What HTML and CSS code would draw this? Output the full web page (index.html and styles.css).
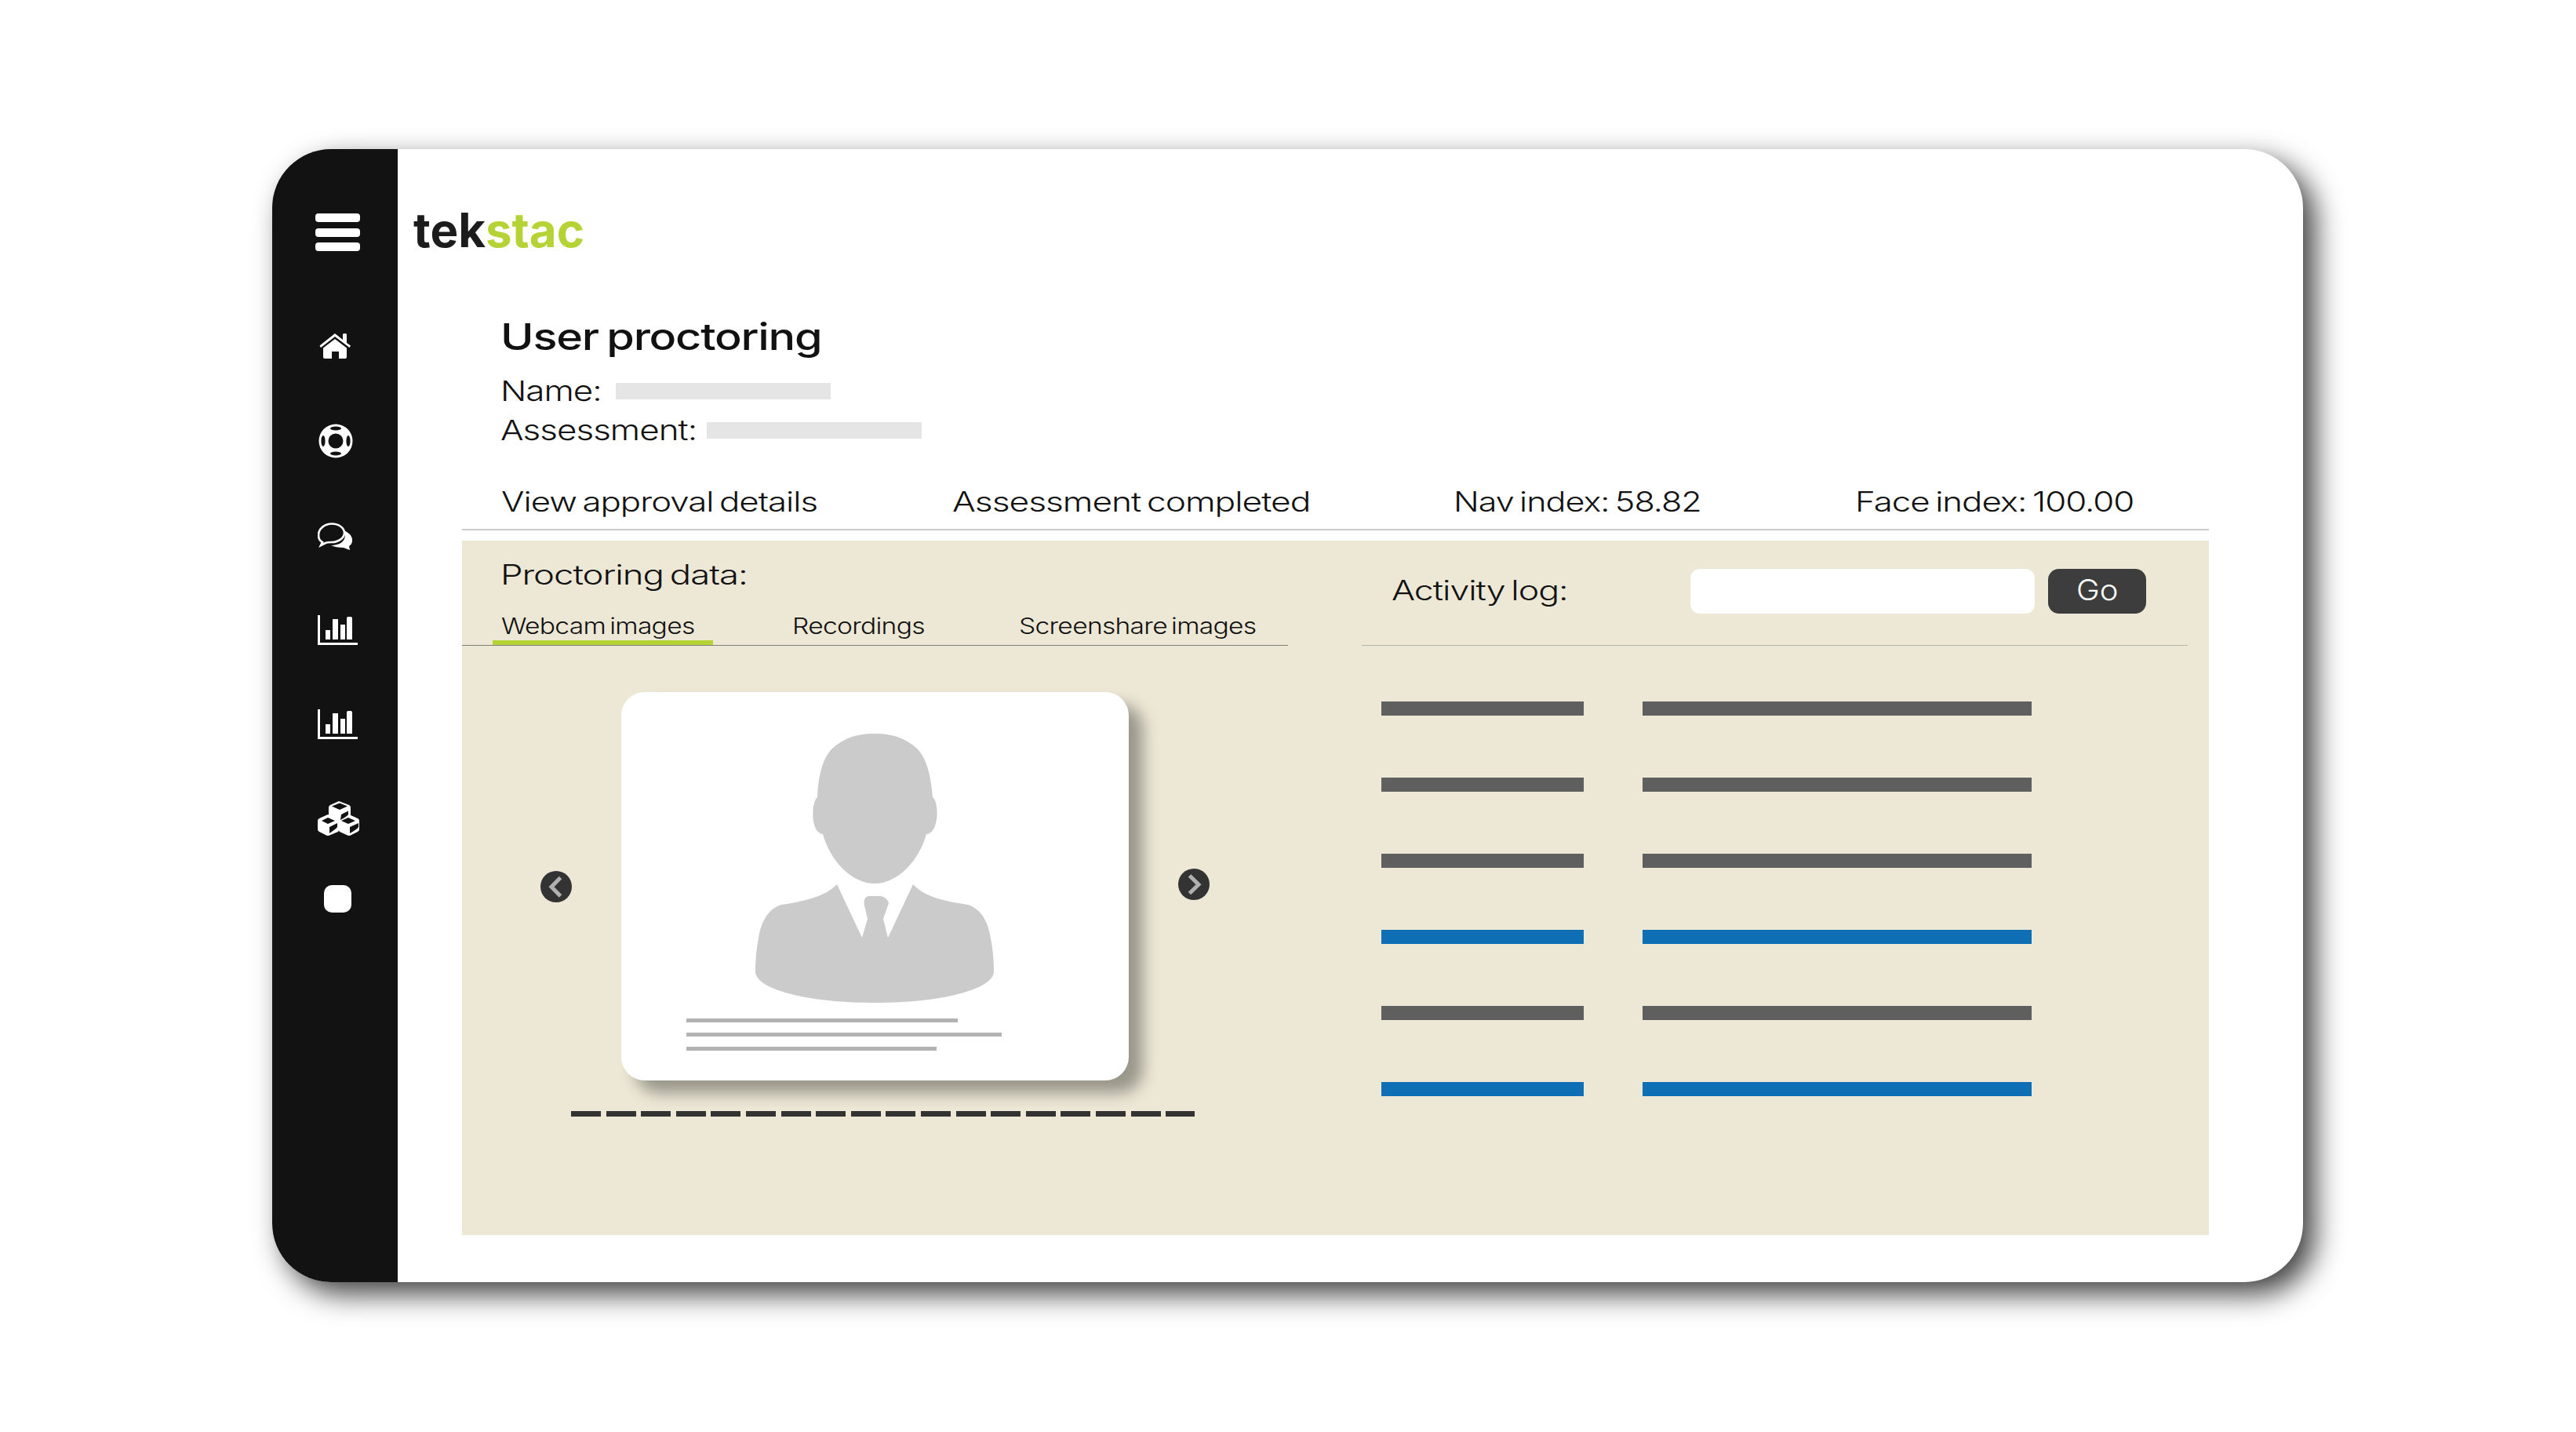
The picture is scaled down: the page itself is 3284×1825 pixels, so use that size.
FILE: index.html
```html
<!DOCTYPE html>
<html lang="en">
<head>
<meta charset="utf-8">
<title>User proctoring</title>
<link rel="stylesheet" href="styles.css">
</head>
<body>
<div class="window">
  <nav class="sidebar">
    <div class="burger"><span></span><span></span><span></span></div>
    <svg class="ico ico-home" viewBox="0 0 40 32"><path d="M0.5 15.5 L20 0 L30 8 V1.5 Q30 0 31.5 0 H33.5 Q35 0 35 1.5 V12 L40 15.5 L38.5 18 L20 4 L2 18 Z" fill="#fff"/><path d="M20 7 L35 18.5 V30 Q35 32 33 32 H25 V23 H16 V32 H7 Q5 32 5 30 V18.5 Z" fill="#fff"/></svg>
    <svg class="ico ico-buoy" viewBox="0 0 44 44"><circle cx="22" cy="22" r="21.5" fill="#fff"/><circle cx="22" cy="22" r="9.5" fill="#121212"/><ellipse cx="22" cy="6" rx="7" ry="2.6" fill="#121212"/><ellipse cx="22" cy="38" rx="7" ry="2.6" fill="#121212"/><ellipse cx="6" cy="22" rx="2.6" ry="7" fill="#121212"/><ellipse cx="38" cy="22" rx="2.6" ry="7" fill="#121212"/></svg>
    <svg class="ico ico-chat" viewBox="0 0 44 35"><path d="M33 10 C38 12 45 16 44 24 C43.500 27 42 29 40 30 L41 35 L33 32 C27 32 21 31 17 29 C24 29 31 27 34 21 C35.500 17 35 13 33 10 Z" fill="#fff"/><path d="M4 29 L6 25 C2 23 1 19 1 16 C1 7 10 1.500 18 1.500 C27 1.500 34 7 34 13 C34 20 26 25 18 25 C15 25 12 25 10 26 Z" fill="#121212" stroke="#fff" stroke-width="2.600"/></svg>
    <svg class="ico ico-chart" viewBox="0 0 51 38"><path d="M0 0 H3 V35 H51 V38 H0 Z M10 19 H16 V31 H10 Z M19 5 H26 V31 H19 Z M29 12 H35 V31 H29 Z M37 3.500 Q37 2 39 2 H42 Q44 2 44 3.500 V31 H37 Z" fill="#fff"/></svg>
    <svg class="ico ico-chart ico-chart-two" viewBox="0 0 51 38"><path d="M0 0 H3 V35 H51 V38 H0 Z M10 19 H16 V31 H10 Z M19 5 H26 V31 H19 Z M29 12 H35 V31 H29 Z M37 3.500 Q37 2 39 2 H42 Q44 2 44 3.500 V31 H37 Z" fill="#fff"/></svg>
    <svg class="ico ico-cubes" viewBox="0 0 53 44"><g fill="#fff"><path d="M27 0 L40 5 Q42 6 42 8 V22 L27 30 L14 22 V8 Q14 6 16 5 Z"/><path d="M13 17 L26 23 Q27 24 27 26 V37 Q27 38 26 39 L14 44 Q13 44 12 44 L2 39 Q0 38 0 36 V25 Q0 23 2 22 Z"/><path d="M40 17 L51 22 Q53 23 53 25 V36 Q53 38 51 39 L41 44 Q40 44 39 44 L28 39 Q27 38 27 37 V26 Q27 24 28 23 Z"/></g><g fill="#121212"><path d="M28 2.500 L38 6.500 L28 11 L18 6.500 Z"/><path d="M30 17 L39 12.500 V17 Q38 19 29 24 Z"/><path d="M13 21 L22 25 L13 29 L5 25 Z"/><path d="M15 33 L25 28 V33 Q24 35 15 41 Z"/><path d="M39 21 L48 25 L39 29 L30 25 Z"/><path d="M41 33 L52 28 V33 Q50 36 41 41 Z"/></g></svg>
    <div class="stop"></div>
  </nav>
  <main class="main">
    <div class="logo">tek<span class="logo-accent">stac</span></div>
    <section class="intro">
      <h1 class="title"><span class="wide wide-title">User proctoring</span></h1>
      <div class="field"><span class="label label-name"><span class="wide wide-field">Name:</span></span><span class="redact"></span></div>
      <div class="field"><span class="label label-assess"><span class="wide wide-field">Assessment:</span></span><span class="redact"></span></div>
    </section>
    <div class="stats">
      <span class="wide">View approval details</span>
      <span class="wide wide-more">Assessment completed</span>
      <span class="wide wide-less">Nav index: 58.82</span>
      <span class="wide">Face index: 100.00</span>
    </div>
    <section class="panel">
      <div class="left">
        <h2 class="panel-title"><span class="wide wide-panel">Proctoring data:</span></h2>
        <div class="tabs">
          <span class="tab tab-active"><span class="wide wide-tab">Webcam images</span></span>
          <span class="tab tab-mid"><span class="wide wide-tab">Recordings</span></span>
          <span class="tab"><span class="wide wide-tab">Screenshare images</span></span>
        </div>
        <div class="gallery">
          <button class="arrow" aria-label="Previous"><svg viewBox="0 0 40 40"><path d="M25.500 8.500 L14 20.300 L25.500 32" fill="none" stroke="#b0b0b0" stroke-width="5"/></svg></button>
          <div class="card">
            <svg class="person" viewBox="303 74 304 343"><path fill="#cbcbcb" d="M455 74 C428 74 414 82 402 92 C388 105 383 130 382 155 C376 160 375 180 378 190 C380 198 385 202 389 202 C398 235 425 265 455 265 C485 265 512 235 521 202 C526 202 531 197 533 188 C536 178 535 160 529 155 C527 130 522 105 508 92 C496 82 482 74 455 74 Z"/><path fill="#cbcbcb" d="M407 266 L439 334 L446 310 L442 293 Q440 283 447 281 H463 Q471 283 473 290 L466 310 L472 334 L504 266 C518 281 540 287 574 292 C592 298 600 315 603 335 C606 350 607 365 607 377 C607 400 540 417 455 417 C370 417 303 400 303 377 C303 365 304 350 307 335 C310 315 318 298 336 292 C370 287 392 281 407 266 Z"/></svg>
            <div class="caption">
              <span class="cap-line cap-a"></span>
              <span class="cap-line cap-b"></span>
              <span class="cap-line cap-c"></span>
            </div>
          </div>
          <button class="arrow arrow-next" aria-label="Next"><svg viewBox="0 0 40 40"><path d="M14.500 9 L26 20.300 L14.500 31.500" fill="none" stroke="#b0b0b0" stroke-width="5"/></svg></button>
        </div>
        <div class="dashes"></div>
      </div>
      <div class="right">
        <div class="log-head">
          <span class="log-label"><span class="wide wide-log">Activity log:</span></span>
          <input class="log-input" type="text" aria-label="Activity log">
          <button class="go"><span class="wide wide-go">Go</span></button>
        </div>
        <div class="log">
          <span class="bar"></span><span class="bar"></span>
          <span class="bar"></span><span class="bar"></span>
          <span class="bar"></span><span class="bar"></span>
          <span class="bar bar-blue"></span><span class="bar bar-blue"></span>
          <span class="bar"></span><span class="bar"></span>
          <span class="bar bar-blue"></span><span class="bar bar-blue"></span>
        </div>
      </div>
    </section>
  </main>
</div>
</body>
</html>
```
FILE: styles.css
```css
* { box-sizing: border-box; }
html, body { margin: 0; background: #fff; }
body {
  width: 3284px;
  height: 1825px;
  padding: 190px 348px 191px 347px;
  overflow: hidden;
  font-family: Inter, "Liberation Sans", sans-serif;
  color: #111;
}
.wide {
  display: inline-block;
  white-space: nowrap;
  letter-spacing: -.8px;
  word-spacing: -3px;
  transform-origin: 0 50%;
  transform: scaleX(1.25);
}
.wide-more { transform: scaleX(1.265); }
.wide-less { transform: scaleX(1.23); }
.wide-title { letter-spacing: -1px; transform: scaleX(1.225); }
.wide-field { transform: scaleX(1.22); }
.wide-panel { transform: scaleX(1.3); }
.wide-log { transform: scaleX(1.275); }
.wide-tab { letter-spacing: -.6px; transform: scaleX(1.2); }
.wide-go { letter-spacing: 0; transform-origin: 50% 50%; transform: scaleX(1.08); }
.window {
  display: flex;
  height: 1444px;
  background: #fff;
  border-radius: 75px;
  box-shadow: 15px 15px 36px rgba(0, 0, 0, .75);
  overflow: hidden;
}
.sidebar {
  flex: 0 0 160px;
  display: flex;
  flex-direction: column;
  align-items: flex-start;
  padding: 82px 0 0 58px;
  background: #121212;
}
.burger { display: flex; flex-direction: column; gap: 7.5px; width: 57px; margin-left: -3px; }
.burger span { height: 11px; border-radius: 4px; background: #fff; }
.ico { display: block; }
.ico-home { width: 40px; height: 32px; margin: 105px 0 0 2px; }
.ico-buoy { width: 44px; height: 44px; margin: 83px 0 0 1px; }
.ico-chat { width: 44px; height: 35px; margin: 82px 0 0 0; }
.ico-chart { width: 51px; height: 38px; margin: 83px 0 0 0; }
.ico-chart-two { margin-top: 82px; }
.ico-cubes { width: 53px; height: 44px; margin: 79px 0 0 0; }
.stop { width: 35px; height: 35px; margin: 63px 0 0 8px; border-radius: 10px; background: #fff; }

.main { flex: 1; padding: 71px 120px 0 20px; min-width: 0; }
.logo {
  font: 700 60px/64px Inter, sans-serif;
  color: #1c1c1c;
}
.logo-accent { color: #b5d334; }
.intro { margin: 76px 0 0 111px; }
.title { margin: 0 0 16px; font-size: 47px; line-height: 56px; font-weight: 500; }
.field { display: flex; align-items: center; font-size: 36px; line-height: 50px; font-weight: 340; }
.label-name { width: 147px; }
.label-assess { width: 263px; }
.redact { height: 21px; background: #e5e5e5; width: 274px; }
.stats {
  display: grid;
  grid-template-columns: 575px 639px 512px auto;
  margin: 41px 0 0 62px;
  padding: 0 0 10px 50px;
  border-bottom: 2px solid #ccc;
  font-size: 35px;
  line-height: 50px;
  font-weight: 340;
}
.panel {
  display: flex;
  gap: 94px;
  height: 885px;
  margin: 13px 0 0 62px;
  background: #ede8d6;
}
.left { flex: 0 0 1053px; padding-top: 18px; }
.panel-title { margin: 0 0 23px 49px; font-size: 35px; line-height: 50px; font-weight: 340; }
.tabs { display: flex; padding-left: 39px; border-bottom: 1px solid #80807a; font-size: 28px; line-height: 36px; font-weight: 340; }
.tab { display: block; }
.tab-active { width: 281px; padding-left: 11px; border-bottom: 6px solid #b5d334; }
.tab-mid { width: 390px; padding-left: 101px; }
.gallery { display: flex; align-items: center; gap: 63px; margin: 59px 0 0 100px; }
.arrow { flex: none; width: 40px; height: 40px; padding: 0; border: 0; border-radius: 50%; background: #333; }
.arrow svg { display: block; }
.arrow-next { margin-top: -5px; }
.card {
  flex: none;
  width: 647px;
  height: 495px;
  padding-top: 53px;
  border-radius: 30px;
  background: #fff;
  box-shadow: 18px 16px 20px rgba(0, 0, 0, .36);
}
.person { display: block; width: 304px; height: 343px; margin-left: 171px; }
.caption { display: flex; flex-direction: column; gap: 13px; margin: 20px 0 0 83px; }
.cap-line { display: block; height: 5px; background: #b3b3b3; }
.cap-a { width: 346px; }
.cap-b { width: 402px; }
.cap-c { width: 319px; }
.dashes {
  width: 795px;
  height: 7px;
  margin: 39px 0 0 139px;
  background: repeating-linear-gradient(90deg, #333 0, #333 38px, transparent 38px, transparent 44.6px);
}
.right { flex: 0 0 1053px; }
.log-head {
  display: flex;
  align-items: center;
  height: 134px;
  padding: 36px 0 40px 38px;
  border-bottom: 1px solid #b5b5a8;
}
.log-label { width: 381px; padding-bottom: 4px; font-size: 35px; line-height: 50px; font-weight: 340; }
.log-input { width: 439px; height: 57px; margin-right: 17px; border: 0; border-radius: 12px; background: #fff; }
.go {
  width: 125px;
  height: 57px;
  padding: 0 0 4px;
  border: 0;
  border-radius: 14px;
  background: #3d3d3d;
  color: #fff;
  font: 300 37px/50px Inter, sans-serif;
}
.log {
  display: grid;
  grid-template-columns: 258px 496px;
  column-gap: 75px;
  row-gap: 79px;
  margin: 71px 0 0 25px;
}
.bar { display: block; height: 18px; background: #5f5f5f; }
.bar-blue { background: #0f6fb5; }
```
